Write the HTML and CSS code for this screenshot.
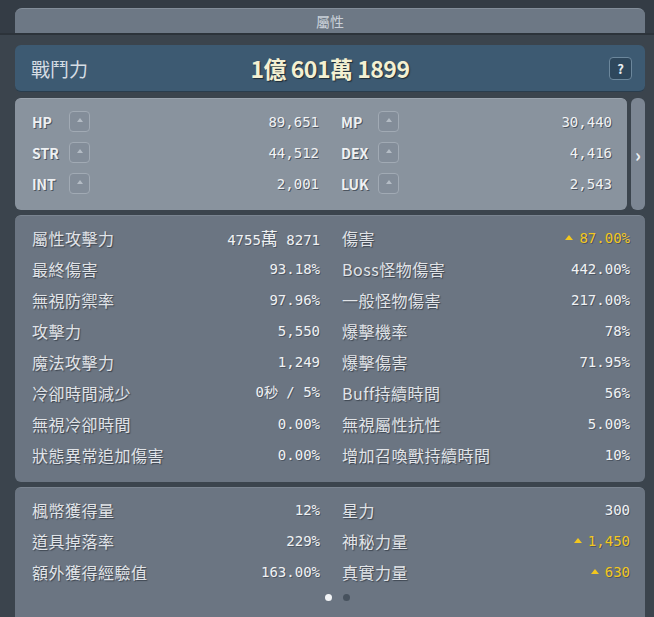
FILE: index.html
```html
<!DOCTYPE html>
<html lang="zh-Hant">
<head>
    <meta charset="UTF-8">
    <title>屬性</title>
    <link rel="stylesheet" href="styles.css">
</head>
<body>
    <div class="window">
        <div class="title-bar">屬性</div>
        <div class="window-body">
            <div class="power">
                <span class="power-label">戰鬥力</span>
                <span class="power-value">1億 601萬 1899</span>
                <span class="help-btn">?</span>
            </div>

            <div class="base-row">
                <div class="panel panel-light base-grid">
                    <div class="base-stat"><span class="base-name">HP</span><span class="up-btn"></span><span class="val">89,651</span></div>
                    <div class="base-stat"><span class="base-name">MP</span><span class="up-btn"></span><span class="val">30,440</span></div>
                    <div class="base-stat"><span class="base-name">STR</span><span class="up-btn"></span><span class="val">44,512</span></div>
                    <div class="base-stat"><span class="base-name">DEX</span><span class="up-btn"></span><span class="val">4,416</span></div>
                    <div class="base-stat"><span class="base-name">INT</span><span class="up-btn"></span><span class="val">2,001</span></div>
                    <div class="base-stat"><span class="base-name">LUK</span><span class="up-btn"></span><span class="val">2,543</span></div>
                </div>
                <div class="side-tab">&#8250;</div>
            </div>

            <div class="panel stat-grid">
                <div class="stat"><span class="name">屬性攻擊力</span><span class="val">4755<span class="big">萬</span> 8271</span></div>
                <div class="stat"><span class="name">傷害</span><span class="val up">87.00%</span></div>
                <div class="stat"><span class="name">最終傷害</span><span class="val">93.18%</span></div>
                <div class="stat"><span class="name">Boss怪物傷害</span><span class="val">442.00%</span></div>
                <div class="stat"><span class="name">無視防禦率</span><span class="val">97.96%</span></div>
                <div class="stat"><span class="name">一般怪物傷害</span><span class="val">217.00%</span></div>
                <div class="stat"><span class="name">攻擊力</span><span class="val">5,550</span></div>
                <div class="stat"><span class="name">爆擊機率</span><span class="val">78%</span></div>
                <div class="stat"><span class="name">魔法攻擊力</span><span class="val">1,249</span></div>
                <div class="stat"><span class="name">爆擊傷害</span><span class="val">71.95%</span></div>
                <div class="stat"><span class="name">冷卻時間減少</span><span class="val">0秒 / 5%</span></div>
                <div class="stat"><span class="name">Buff持續時間</span><span class="val">56%</span></div>
                <div class="stat"><span class="name">無視冷卻時間</span><span class="val">0.00%</span></div>
                <div class="stat"><span class="name">無視屬性抗性</span><span class="val">5.00%</span></div>
                <div class="stat"><span class="name">狀態異常追加傷害</span><span class="val">0.00%</span></div>
                <div class="stat"><span class="name">增加召喚獸持續時間</span><span class="val">10%</span></div>
            </div>

            <div class="panel stat-grid last-panel">
                <div class="stat"><span class="name">楓幣獲得量</span><span class="val">12%</span></div>
                <div class="stat"><span class="name">星力</span><span class="val">300</span></div>
                <div class="stat"><span class="name">道具掉落率</span><span class="val">229%</span></div>
                <div class="stat"><span class="name">神秘力量</span><span class="val up">1,450</span></div>
                <div class="stat"><span class="name">額外獲得經驗值</span><span class="val">163.00%</span></div>
                <div class="stat"><span class="name">真實力量</span><span class="val up">630</span></div>
                <div class="pager">
                    <span class="dot active"></span>
                    <span class="dot"></span>
                </div>
            </div>
        </div>
    </div>
</body>
</html>
```

FILE: styles.css
```css
/* Page */
body {
    margin: 0;
    background: #343c45;
    font-family: "Noto Sans CJK TC", "Noto Sans", sans-serif;
    color: #e6e9ec;
    overflow: hidden;
}

/* Window */
.window {
    padding-top: 8px;
}

.title-bar {
    margin: 0 9px 0 15px;
    height: 25px;
    line-height: 24px;
    background: #6d7885;
    border-radius: 7px 7px 0 0;
    border-top: 1px solid #838e9a;
    box-sizing: border-box;
    text-align: center;
    font-size: 14px;
    color: #c9d0d8;
}

.window-body {
    background: #3b444d;
    border-top: 2px solid #2c333a;
    padding: 10px 9px 0 15px;
    height: 600px;
}

/* Power bar */
.power {
    display: flex;
    align-items: center;
    height: 47px;
    background: #3d5a72;
    border-radius: 6px;
    border-bottom: 1px solid #2a3d4d;
    box-sizing: border-box;
    padding: 0 13px 0 16px;
    position: relative;
}

.power-label {
    font-size: 19px;
    color: #d6dde4;
}

.power-value {
    position: absolute;
    left: 0;
    right: 0;
    text-align: center;
    font-size: 23px;
    font-weight: bold;
    color: #f4f0d2;
    text-shadow: 1px 1px 1px #1e2b36;
    letter-spacing: -0.5px;
}

.help-btn {
    margin-left: auto;
    width: 23px;
    height: 23px;
    box-sizing: border-box;
    border: 1px solid #6c879c;
    border-radius: 4px;
    background: #2e475c;
    text-align: center;
    line-height: 21px;
    font-size: 13px;
    font-weight: bold;
    color: #e8edf1;
    position: relative;
}

/* Panels */
.panel {
    background: #6b7582;
    border-radius: 6px;
    margin-top: 5px;
    border-top: 1px solid #7a8490;
}

.panel-light {
    background: #89939e;
    border-top: 1px solid #9aa3ad;
    margin-top: 0;
}

.base-row {
    display: flex;
    gap: 4px;
    margin-top: 6px;
}

.base-grid {
    flex: 1;
    display: grid;
    grid-template-columns: 287px 1fr;
    column-gap: 22px;
    padding: 7px 15px 11px 17px;
}

.side-tab {
    width: 14px;
    background: #7c8693;
    border-radius: 6px;
    display: flex;
    align-items: center;
    justify-content: center;
    font-size: 18px;
    font-weight: bold;
    color: #eef1f4;
}

.base-stat {
    display: flex;
    align-items: center;
    height: 31px;
}

.base-name {
    width: 37px;
    font-size: 14px;
    font-weight: bold;
    color: #eef0f2;
    text-shadow: 1px 1px 0 #4c5560;
}

.up-btn {
    width: 21px;
    height: 21px;
    box-sizing: border-box;
    border: 1px solid #a1aab4;
    border-radius: 4px;
    background: #838d99;
    position: relative;
}

.up-btn::after {
    content: "";
    position: absolute;
    left: 7px;
    top: 6px;
    border: 3px solid transparent;
    border-bottom: 4px solid #b4bcc5;
    border-top: 0;
}

/* Stat rows */
.stat-grid {
    display: grid;
    grid-template-columns: 1fr 1fr;
    column-gap: 22px;
    padding: 6px 15px 12px 17px;
}

.stat {
    display: flex;
    align-items: center;
    height: 31px;
}

.name {
    font-size: 16px;
    letter-spacing: 0.5px;
    color: #e1e4e8;
    text-shadow: 1px 1px 1px #3d4550;
}

.val {
    margin-left: auto;
    font-family: "DejaVu Sans Mono", monospace;
    font-size: 14px;
    color: #f0f2f4;
    text-shadow: 1px 1px 0 #4d5662;
}

.big {
    font-family: "Noto Sans CJK TC", sans-serif;
    font-size: 17px;
}

.val.up {
    color: #f2c71f;
}

.val.up::before {
    content: "";
    display: inline-block;
    margin-right: 6px;
    vertical-align: 3px;
    border: 4px solid transparent;
    border-bottom: 5px solid #f2c71f;
    border-top: 0;
}

.last-panel {
    padding-bottom: 40px;
}

/* Page dots */
.pager {
    grid-column: 1 / -1;
    display: flex;
    justify-content: center;
    gap: 11px;
    margin-top: 7px;
    padding-left: 12px;
}

.dot {
    width: 7px;
    height: 7px;
    border-radius: 50%;
    background: #47525e;
}

.dot.active {
    background: #f2f4f6;
}
```
